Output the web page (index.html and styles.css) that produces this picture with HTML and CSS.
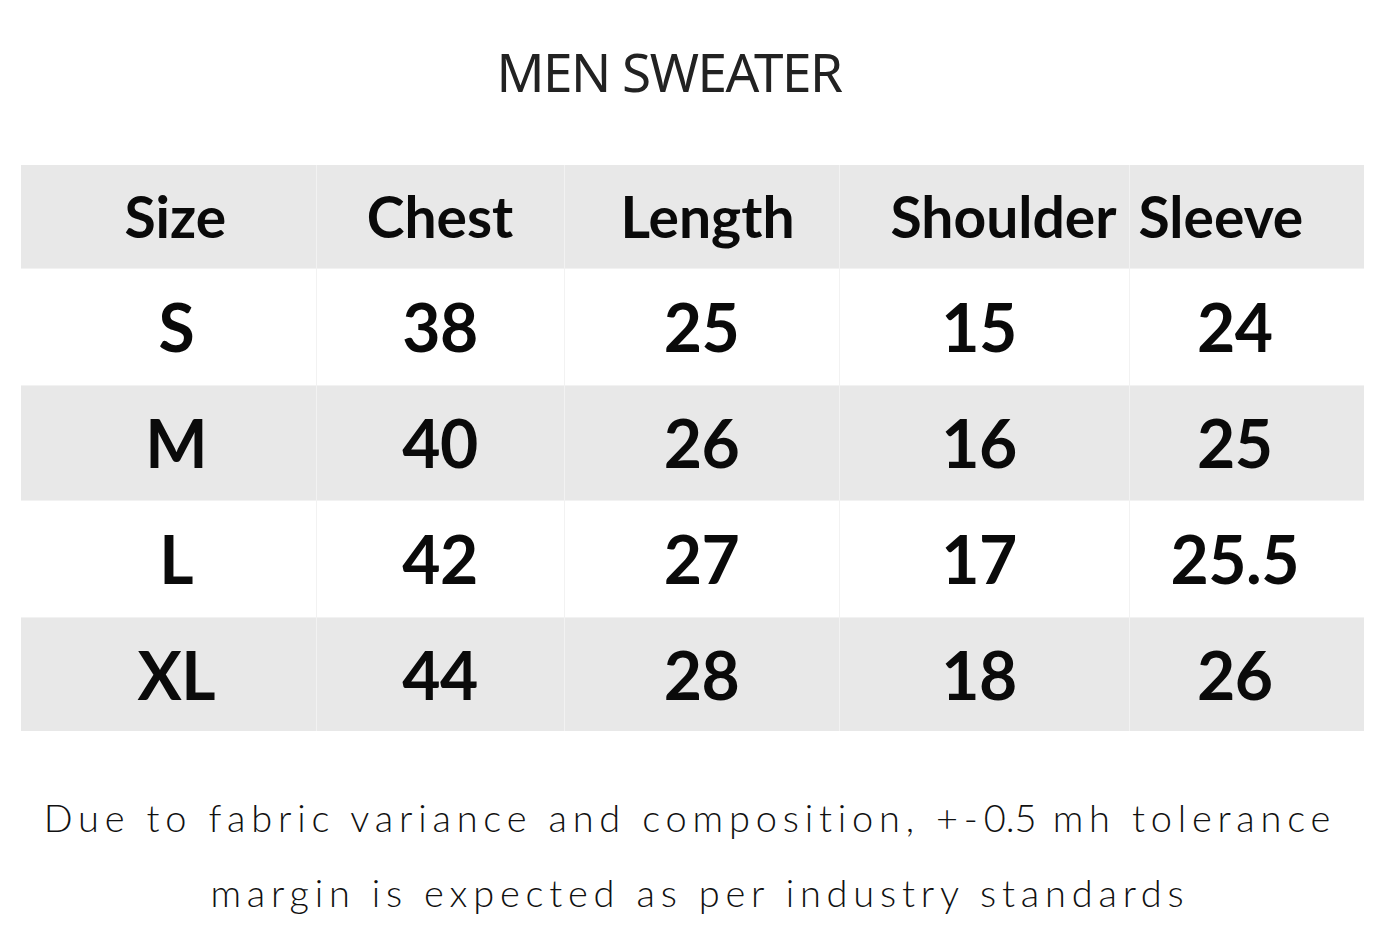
FILE: index.html
```html
<!DOCTYPE html>
<html lang="en">
<head>
<meta charset="utf-8">
<title>Men Sweater Size Chart</title>
<link rel="stylesheet" href="styles.css">
</head>
<body>
<main class="page">
  <h1 class="title">MEN SWEATER</h1>
  <table class="chart">
    <colgroup>
      <col class="c1"><col class="c2"><col class="c3"><col class="c4"><col class="c5">
    </colgroup>
    <thead>
      <tr class="head"><th class="k1">Size</th><th>Chest</th><th class="k3">Length</th><th class="sh">Shoulder</th><th class="sl">Sleeve</th></tr>
    </thead>
    <tbody>
      <tr class="white r1"><td class="k1">S</td><td>38</td><td>25</td><td class="k4">15</td><td class="k5">24</td></tr>
      <tr class="grey r2"><td class="k1">M</td><td>40</td><td>26</td><td class="k4">16</td><td class="k5">25</td></tr>
      <tr class="white r3"><td class="k1">L</td><td>42</td><td>27</td><td class="k4">17</td><td class="k5">25.5</td></tr>
      <tr class="grey r4"><td class="k1">XL</td><td>44</td><td>28</td><td class="k4">18</td><td class="k5">26</td></tr>
    </tbody>
  </table>
  <p class="note"><span class="line1">Due to fabric variance and composition, +-<span class="num">0.5</span> mh tolerance</span><br>margin is expected as per industry standards</p>
</main>
</body>
</html>
```

FILE: styles.css
```css
* { box-sizing: border-box; }
html, body { margin: 0; padding: 0; background: #ffffff; }
body { width: 1400px; height: 933px; overflow: hidden; font-family: "Lato", "Noto Sans", sans-serif; color: #000; }

.page { display: flex; flex-direction: column; align-items: stretch; }

.title {
  margin: 0;
  padding: 36px 62px 0 0;
  height: 165px;
  text-align: center;
  font-family: "Noto Sans", sans-serif;
  font-weight: 400;
  font-size: 53px;
  letter-spacing: -1.5px;
  line-height: 72px;
  color: #222;
}

.chart {
  margin-left: 21px;
  width: 1343px;
  border-collapse: collapse;
  table-layout: fixed;
}
.c1 { width: 295px; }
.c2 { width: 248px; }
.c3 { width: 275px; }
.c4 { width: 290px; }
.c5 { width: 235px; }

.chart th, .chart td {
  border: 1px solid #f2f2f2;
  text-align: center;
  padding: 0;
  color: #0a0a0a;
}
.chart tr:first-child th, .chart tr:first-child td { border-top: none; }
.chart tr > :first-child { border-left: none; }
.chart tr > :last-child { border-right: none; }
.chart tbody tr:last-child td { border-bottom: none; }

.head { background: #e8e8e8; height: 103px; }
.head th { font-weight: 700; font-size: 57px; letter-spacing: 0; }
.head .k1 { padding-left: 14px; }
.head .k3 { padding-left: 12px; }
.head .sh { text-align: right; padding-right: 12px; }
.head .sl { text-align: left; padding-left: 9px; }

.white { background: #ffffff; }
.grey { background: #e8e8e8; }
.r1 { height: 117px; }
.r2 { height: 115px; }
.r3 { height: 117px; }
.r4 { height: 114px; }
.chart td { font-weight: 700; font-size: 66px; letter-spacing: -0.5px; }
.chart td.k1 { padding-left: 16px; }
.chart td.k4 { padding-right: 10px; }
.chart td.k5 { padding-right: 24px; }

.note {
  margin: 0;
  padding-top: 49px;
  text-align: center;
  font-family: "Lato", sans-serif;
  font-weight: 300;
  font-size: 38px;
  line-height: 75px;
  letter-spacing: 5.8px;
  color: #111;
}
.note .line1 { position: relative; left: -10px; }
.note .num { letter-spacing: 0; }
```
